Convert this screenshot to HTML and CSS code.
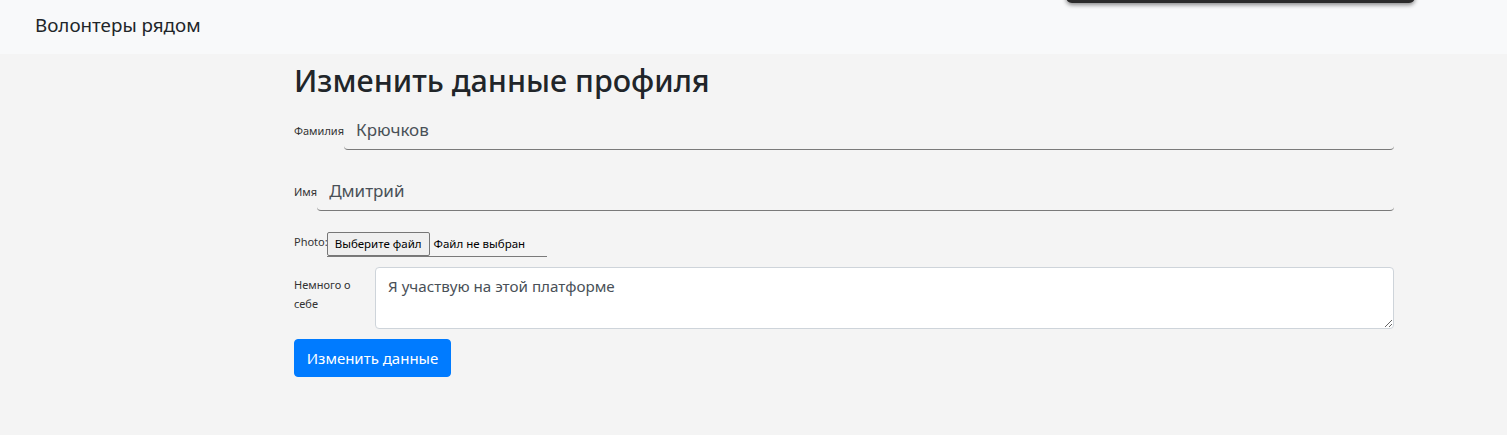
FILE: index.html
```html
<!DOCTYPE html>
<html lang="ru">
<head>
<meta charset="utf-8">
<title>Волонтеры рядом</title>
<link rel="stylesheet" href="styles.css">
</head>
<body>
<nav class="navbar">
  <a class="brand" href="#">Волонтеры рядом</a>
  <div class="overlay-bar"></div>
</nav>
<main class="content">
  <h2 class="title">Изменить данные профиля</h2>
  <form class="form">
    <div class="row">
      <label class="lbl lbl-line" for="last">Фамилия</label>
      <input class="line-input" id="last" type="text" value="Крючков">
    </div>
    <div class="row">
      <label class="lbl lbl-line" for="first">Имя</label>
      <input class="line-input" id="first" type="text" value="Дмитрий">
    </div>
    <div class="row row-top">
      <span class="lbl lbl-photo">Photo:</span>
      <label class="file">
        <span class="file-btn">Выберите файл</span>
        <span class="file-name">Файл не выбран</span>
        <input class="file-hidden" type="file">
      </label>
    </div>
    <div class="row row-about">
      <label class="lbl lbl-about" for="about">Немного о себе</label>
      <textarea class="area" id="about">Я участвую на этой платформе</textarea>
    </div>
    <button class="btn" type="button">Изменить данные</button>
  </form>
</main>
</body>
</html>
```
FILE: styles.css
```css
* { box-sizing: border-box; }
html, body { margin: 0; padding: 0; }
body {
  background: #f4f4f4;
  font-family: "Noto Sans", "Open Sans", sans-serif;
  color: #212529;
  min-height: 435px;
}
.navbar {
  position: relative;
  height: 54px;
  background: #f8f9fa;
  display: flex;
  align-items: center;
  padding: 0 35px;
}
.brand {
  font-size: 18.8px;
  color: #212529;
  text-decoration: none;
  line-height: 1;
  margin-top: -4px;
}
.overlay-bar {
  position: absolute;
  left: 1066px;
  top: -20px;
  width: 349px;
  height: 23px;
  background: #2b2b2b;
  border-radius: 6px;
  box-shadow: 0 2px 4px rgba(0,0,0,.45);
}
.content {
  margin-left: 294px;
  width: 1100px;
}
.title {
  margin: 8px 0 0;
  font-size: 30.5px;
  font-weight: 500;
  line-height: 1.2;
  color: #212529;
}
.form { margin-top: 11px; }
.row {
  display: flex;
  align-items: center;
  margin-bottom: 21px;
}
.lbl {
  font-size: 11px;
  color: #333;
  line-height: 1.7;
  white-space: nowrap;
}
.lbl-line { margin-top: 3px; }
.line-input {
  flex: 1;
  height: 40px;
  border: none;
  border-bottom: 1px solid #7a7a7a;
  border-radius: 4px;
  background: transparent;
  padding: 0 12px;
  font-family: inherit;
  font-size: 17px;
  color: #495057;
  outline: none;
}
.row-top { align-items: flex-start; margin-bottom: 10px; }
.lbl-photo { margin-top: 1px; margin-right: -1px; }
.file {
  display: flex;
  align-items: center;
  width: 220px;
  height: 25px;
  border-bottom: 1px solid #7a7a7a;
  cursor: pointer;
}
.file-btn {
  display: inline-flex;
  align-items: center;
  height: 24px;
  padding: 0 7px;
  background: #efefef;
  border: 1px solid #767676;
  border-radius: 2px;
  font-size: 11.5px;
  color: #000;
}
.file-name {
  margin-left: 4px;
  font-size: 11.5px;
  color: #000;
}
.file-hidden { display: none; }
.row-about { margin-bottom: 10px; }
.lbl-about {
  width: 81px;
  flex: none;
  white-space: normal;
  line-height: 19px;
  margin-bottom: 7px;
}
.area {
  flex: 1;
  height: 62px;
  border: 1px solid #ced4da;
  border-radius: 4px;
  background: #fff;
  padding: 7px 12px;
  font-family: inherit;
  font-size: 15.2px;
  line-height: 1.5;
  color: #495057;
  resize: vertical;
  outline: none;
}
.btn {
  display: block;
  width: 157px;
  height: 38px;
  background: #007bff;
  border: 1px solid #007bff;
  border-radius: 4px;
  color: #fff;
  font-family: inherit;
  font-size: 15px;
  padding: 0;
  cursor: pointer;
}
```
